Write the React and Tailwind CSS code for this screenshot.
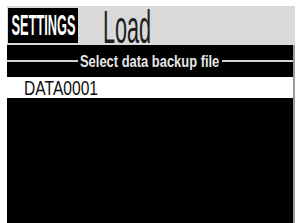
import React from "react";

export default function App() {
  return (
    <main className="h-[223px] w-[298px] overflow-hidden bg-white pl-[7px] pr-[3px] pt-[6px] font-['Liberation_Sans',Arial,sans-serif]">
      <div className="flex h-[217px] flex-col">
        <header className="flex h-[39px] items-center bg-[#d9d9d9]">
          <div className="ml-[1px] flex h-[35px] w-[70px] items-center justify-center bg-black">
            <span className="inline-block scale-x-[0.44] whitespace-nowrap text-[29px] font-bold leading-none text-white">
              SETTINGS
            </span>
          </div>
          <div className="ml-[25px] flex h-[39px] w-[50px] items-end">
            <span className="inline-block origin-left scale-x-[0.47] whitespace-nowrap text-[46px] leading-[36px] text-[#1e1e1e]">
              Load
            </span>
          </div>
        </header>
        <section className="flex flex-1 flex-col border-r-2 border-[#9a9a9a] bg-black">
          <div className="flex h-[32px] items-center">
            <div className="h-[2px] flex-1 bg-[#d4d4d4]" />
            <div className="flex w-[144px] justify-center">
              <span className="inline-block scale-x-[0.76] whitespace-nowrap text-[17px] font-bold leading-none text-[#e6e6e6]">
                Select data backup file
              </span>
            </div>
            <div className="h-[2px] flex-1 bg-[#d4d4d4]" />
          </div>
          <div className="flex h-[21px] items-center bg-white pl-[17px]">
            <span className="inline-block origin-left scale-x-[0.78] whitespace-nowrap text-[20px] leading-none text-[#111]">
              DATA0001
            </span>
          </div>
        </section>
      </div>
    </main>
  );
}
